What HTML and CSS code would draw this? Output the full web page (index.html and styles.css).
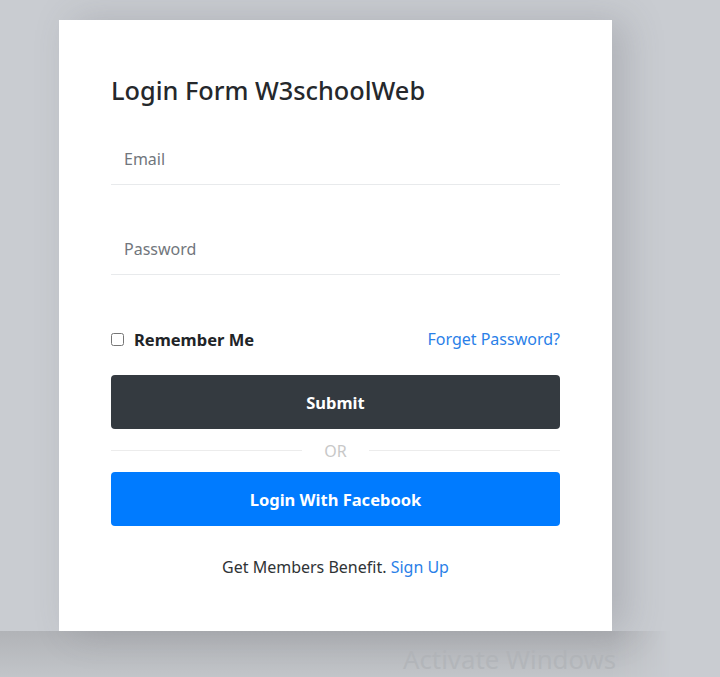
FILE: index.html
```html
<!DOCTYPE html>
<html lang="en">
<head>
<meta charset="utf-8">
<title>Login Form W3schoolWeb</title>
<link rel="stylesheet" href="styles.css">
</head>
<body>
<div class="stage">
  <form class="card">
    <h2 class="title">Login Form W3schoolWeb</h2>
    <input class="field" type="email" placeholder="Email">
    <input class="field field-pass" type="password" placeholder="Password">
    <div class="options">
      <label class="remember"><input type="checkbox" class="check"><span>Remember Me</span></label>
      <a class="link" href="#">Forget Password?</a>
    </div>
    <button type="button" class="btn btn-dark">Submit</button>
    <div class="divider"><span class="line"></span><span class="or">OR</span><span class="line"></span></div>
    <button type="button" class="btn btn-blue">Login With Facebook</button>
    <p class="footer">Get Members Benefit. <a class="link" href="#">Sign Up</a></p>
  </form>
</div>
<div class="watermark">Activate Windows</div>
</body>
</html>
```

FILE: styles.css
```css
* { box-sizing: border-box; }
html, body { margin: 0; height: 100%; }
body {
  background: #c9ccd1;
  font-family: "Noto Sans", "Open Sans", sans-serif;
  overflow: hidden;
  position: relative;
}
.stage {
  position: relative;
  padding: 20px 0 0 59px;
  height: 677px;
}
.stage::after {
  content: "";
  position: absolute;
  left: 0;
  top: 631px;
  width: 680px;
  height: 46px;
  background: linear-gradient(#b1b3b7, #c2c5c9);
  -webkit-mask-image: linear-gradient(to right, #000 612px, transparent 670px);
  mask-image: linear-gradient(to right, #000 612px, transparent 670px);
}
.card {
  position: relative;
  z-index: 1;
  width: 553px;
  height: 611px;
  background: #fff;
  padding: 52px 52px;
  display: flex;
  flex-direction: column;
  box-shadow: 14px 0 36px rgba(80, 84, 92, 0.22);
}
.title {
  margin: 3px 0 36px;
  font-size: 25.3px;
  line-height: 30px;
  font-weight: 500;
  color: #25282c;
}
.field {
  display: block;
  width: 100%;
  height: 44px;
  border: 0;
  border-bottom: 1px solid #e8eaec;
  padding: 0 13px 8px;
  font-family: inherit;
  font-size: 16px;
  color: #495057;
  outline: none;
}
.field::placeholder { color: #71767c; }
.field-pass { margin-top: 46px; }
.options {
  margin-top: 52px;
  height: 24px;
  display: flex;
  justify-content: space-between;
  align-items: center;
}
.remember {
  display: flex;
  align-items: center;
  gap: 10px;
  font-weight: 700;
  font-size: 16.5px;
  color: #212427;
}
.check {
  margin: 0;
  width: 13px;
  height: 13px;
}
.link {
  color: #2a7fe8;
  text-decoration: none;
  font-size: 16px;
}
.btn {
  display: block;
  width: 100%;
  height: 54px;
  border: 0;
  border-radius: 4px;
  color: #fff;
  font-family: inherit;
  font-size: 16.5px;
  font-weight: 700;
}
.btn-dark { margin-top: 24px; background: #343a40; }
.btn-blue { background: #007bff; }
.divider {
  height: 43px;
  display: flex;
  align-items: center;
  gap: 22px;
}
.line { flex: 1; height: 1px; background: #ececec; }
.or { color: #c8c8c8; font-size: 16px; }
.footer {
  margin: 29px 0 0;
  text-align: center;
  font-size: 16px;
  line-height: 24px;
  color: #2f3336;
}
.watermark {
  position: absolute;
  left: 403px;
  top: 641px;
  font-family: "Noto Sans", sans-serif;
  font-size: 25.8px;
  color: #b4b7bb;
  white-space: nowrap;
}
```
